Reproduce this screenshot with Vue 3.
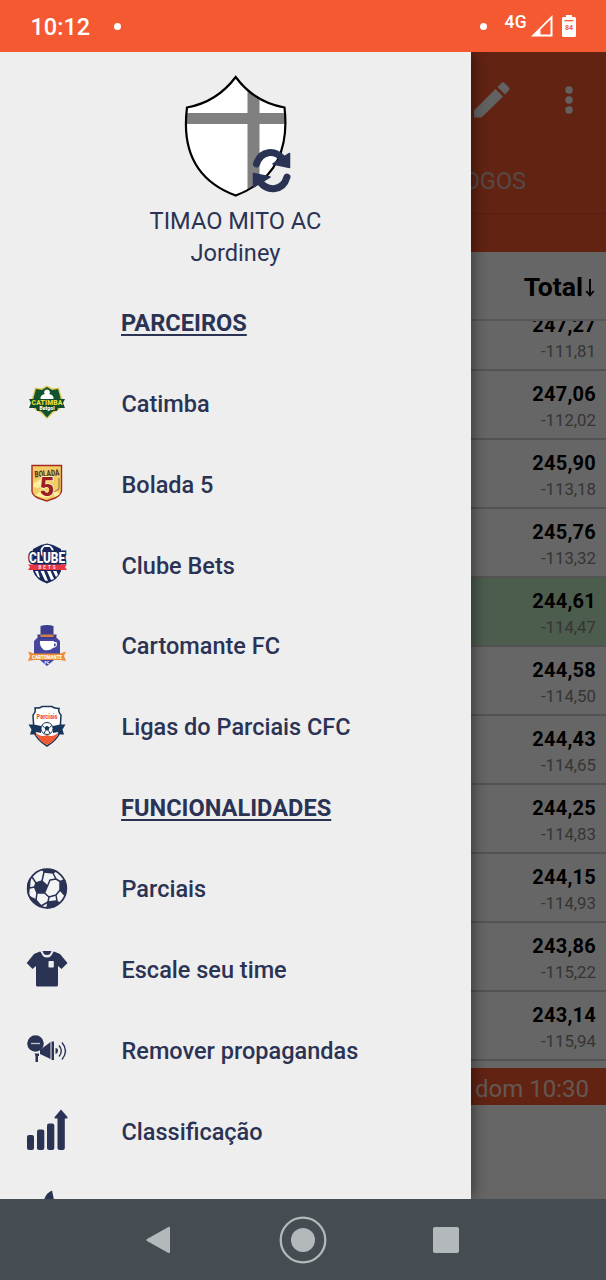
<script setup>
const standings = [
  { total: '247,27', diff: '-111,81' },
  { total: '247,06', diff: '-112,02' },
  { total: '245,90', diff: '-113,18' },
  { total: '245,76', diff: '-113,32' },
  { total: '244,61', diff: '-114,47', mine: true },
  { total: '244,58', diff: '-114,50' },
  { total: '244,43', diff: '-114,65' },
  { total: '244,25', diff: '-114,83' },
  { total: '244,15', diff: '-114,93' },
  { total: '243,86', diff: '-115,22' },
  { total: '243,14', diff: '-115,94' },
]
</script>

<template>
  <div class="phone">
    <header class="status">
      <span class="clock">10:12</span>
      <i class="dot"></i>
      <span class="grow"></span>
      <i class="dot"></i>
      <span class="net">4G</span>
      <svg class="signal" width="22" height="22" viewBox="0 0 22 22">
        <path d="M0 21.5 21.5 0V21.5Z" fill="#fff" />
        <path d="M9.5 19.5V14.5L19.5 4.6V19.5Z" fill="#f45931" />
      </svg>
      <svg class="battery" width="14" height="22" viewBox="0 0 14 22">
        <path d="M4 0H10V2H12.5Q14 2 14 3.5V20.5Q14 22 12.5 22H1.5Q0 22 0 20.5V3.500Q0 2 1.500 2H4Z" fill="#fff" />
        <path d="M2.500 5.700H11.500" stroke="#f45931" stroke-width="1.300" />
        <text x="7" y="15" text-anchor="middle" class="charge">84</text>
      </svg>
    </header>

    <main class="stage">
      <section class="page">
        <div class="appbar">
          <div class="tools">
            <svg width="36" height="36" viewBox="0 0 36 36" fill="#f4f4f4">
              <path d="M0 28.500 21.500 7 29 14.500 7.500 35.500H0Z" />
              <path d="M23.500 5 27.500 1Q29 -.3 30.500 1L35 5.500Q36 7 35 8.300L31 12.500Z" />
            </svg>
            <svg width="8" height="28" viewBox="0 0 8 28" fill="#f4f4f4">
              <circle cx="4" cy="4" r="3.700" /><circle cx="4" cy="14" r="3.700" /><circle cx="4" cy="24" r="3.700" />
            </svg>
          </div>
          <div class="tabs"><span>JOGOS</span></div>
        </div>
        <div class="thead"><span>Total</span>
          <svg width="10" height="18" viewBox="0 0 10 18" fill="none" stroke="#000" stroke-width="1.900"><path d="M5 0V16" /><path d="M1.300 12 5 16.300 8.700 12" /></svg>
        </div>
        <div class="table">
          <div v-for="s in standings" :key="s.total" class="row" :class="{ mine: s.mine }">
            <b>{{ s.total }}</b>
            <span>{{ s.diff }}</span>
          </div>
        </div>
        <div class="banner">dom 10:30</div>
        <div class="scrim"></div>
      </section>

      <nav class="drawer">
        <div class="team">
          <svg class="crest" width="110" height="124" viewBox="0 0 110 124">
            <defs>
              <clipPath id="crestShape"><path d="M53.700 2Q72 27 102.500 32.500C107 72 95 105 53.700 120.500C12 105 0 72 5 32.500Q35 27 53.700 2Z" /></clipPath>
            </defs>
            <g clip-path="url(#crestShape)">
              <path d="M0 0H110V124H0Z" fill="#fff" />
              <path d="M0 38H110V49H0ZM65.500 0H77.500V124H65.500Z" fill="#808080" />
            </g>
            <path d="M53.700 2Q72 27 102.500 32.500C107 72 95 105 53.700 120.500C12 105 0 72 5 32.500Q35 27 53.700 2Z" fill="none" stroke="#000" stroke-width="2.200" />
            <g fill="none" stroke="#2b3355" stroke-width="7" stroke-linecap="round">
              <path d="M74.500 89C79 75 93 74.500 101 84" />
              <path d="M105 102C101 116 86 117 78 107" />
            </g>
            <path d="M107.500 78.500V92.500L91 89ZM71.500 112V98.500L88 102Z" fill="#2b3355" stroke="#2b3355" stroke-width="1.500" stroke-linejoin="round" />
          </svg>
          <p class="team-name">TIMAO MITO AC</p>
          <p class="owner">Jordiney</p>
        </div>

        <h2>PARCEIROS</h2>
        <a class="item">
          <svg viewBox="0 0 42 42">
            <path d="M21 2.500 26.500 5.500 33 4.500 35 12 37 17 34 26 27 30 21 36 15 30 8 26 5 17 7 12 9 4.500 15.500 5.500Z" fill="#e2c850" />
            <path d="M21 4 26 7 32 6 34 13 35 18 32 25 26 29 21 34.500 16 29 10 25 7 18 8 13 10 6 16 7Z" fill="#11552e" />
            <path d="M21 6.500A2.800 2.800 0 0 1 23.300 11Q28 12 27.500 16H14.500Q14 12 18.700 11A2.800 2.800 0 0 1 21 6.500Z" fill="#fff" />
            <path d="M3 16H39L37 20 39 25H32L31 28H11L10 25H3L5 20Z" fill="#124b2c" />
            <text x="21" y="21.500" class="badge" font-size="6.800" fill="#e5df36" textLength="31">CATIMBA</text>
            <text x="21" y="27" class="badge" font-size="5" fill="#fff" textLength="15">Betgol</text>
          </svg>
          <span>Catimba</span>
        </a>
        <a class="item">
          <svg viewBox="0 0 42 42">
            <path d="M6 1.500H35.500V27Q35 31 29 34L20.700 37 12 34Q6 31 6 27Z" fill="#f3cc66" stroke="#a52b22" stroke-width="1.400" />
            <path d="M8 19 17 14 13 24 7 23ZM23 22 34 30 29 33ZM14 28 9 31 21 35Z" fill="#fff0a0" />
            <path d="M33 14V25M26 29 33 25" stroke="#8a6a2a" stroke-width="1" />
            <text x="21" y="12.500" class="badge" font-size="9" fill="#5b3a24" textLength="25" lengthAdjust="spacingAndGlyphs" transform="rotate(-5 21 10)">BOLADA</text>
            <text x="21" y="32" class="badge" font-size="25" fill="#9d1e25" stroke="#fff3a9" stroke-width="2" paint-order="stroke">5</text>
          </svg>
          <span>Bolada 5</span>
        </a>
        <a class="item">
          <svg viewBox="0 0 42 42">
            <path d="M21 -1.500 27 0 35 4V26Q32 35 21 38.500Q10 35 7 26V4L15 0Z" fill="#18275b" />
            <circle cx="21" cy="6.500" r="6.800" fill="#f6f7fb" /><path d="M18 2H24L26 6 21 9 16 6Z" fill="#18275b" />
            <path d="M9 26H12L14 33 12 32ZM14.500 26H18L22 36 19 35.500ZM21 26H24.500L28 34 25 35ZM27 26H30.500L32 30 30 32Z" fill="#fff" />
            <text x="21" y="18" class="badge clube" font-size="14.500" fill="#fff" stroke="#18275b" stroke-width="3" textLength="36" lengthAdjust="spacingAndGlyphs">CLUBE</text>
            <path d="M2 19.500H41L39 22 41 25H2L4 22Z" fill="#e83743" />
            <text x="21" y="24" class="badge" font-size="4.500" fill="#ffd9dd" textLength="17">BETS</text>
          </svg>
          <span>Clube Bets</span>
        </a>
        <a class="item">
          <svg viewBox="0 0 42 42">
            <path d="M13 10H29L34 15V32L28 34 21 40 14 34 8 32V15Z" fill="#4646a0" />
            <path d="M14.500 0Q21 -2 27.500 0V8.500H30.500Q31 12 28 13H14Q11 12 11.500 8.500H14.500Z" fill="#3c3d8c" />
            <path d="M14.500 8.500H27.500V11H14.500Z" fill="#cf8050" />
            <path d="M14 15H28V16H30.500Q32.500 21 27 22Q24 25 18 24Q13 20 14 15ZM28 17.500V20.500Q30.500 20 29.500 17.500Z" fill="#fff" fill-rule="evenodd" />
            <path d="M2 25.500 8 27.500H34L40 25.500 38 30 40 35 34 34H8L2 35 4 30Z" fill="#ec8b38" />
            <text x="21" y="33" class="badge" font-size="5.800" fill="#fff" textLength="30" lengthAdjust="spacingAndGlyphs">CARTOMANTE</text>
            <text x="21" y="37.800" class="badge" font-size="4" fill="#fff">FC</text>
          </svg>
          <span>Cartomante FC</span>
        </a>
        <a class="item">
          <svg viewBox="0 0 42 42">
            <path d="M9 1Q15 1 16 -.500H26Q27 1 33 1.500Q32 5 35 8L34 25Q31 33 21 39Q11 33 8 25L7 8Q10 5 9 1Z" fill="#fff" stroke="#17365a" stroke-width="1.500" />
            <path d="M9 24.500Q14 31 21 28Q28 31 33 24.500Q30 34 21 38Q12 34 9 24.500Z" fill="#ef5b35" />
            <path d="M2.500 17.500H8L15 19V26L10 25 9.500 27.500H4L5.500 22.500ZM39.500 17.500H34L27 19V26L32 25 32.500 27.500H38L36.500 22.500Z" fill="#17365a" />
            <circle cx="21" cy="21.500" r="6" fill="#fff" stroke="#17365a" />
            <path d="M18.500 20.500 21 18.800 23.500 20.500 22.500 23.500H19.500Z" fill="#17365a" />
            <path d="M16 18.500 18.500 20.500M26 18.500 23.500 20.500M19.500 23.500 18 26.500M22.500 23.500 24 26.500" stroke="#17365a" />
            <text x="21" y="12" class="badge" font-size="7" fill="#ef5535" textLength="21" lengthAdjust="spacingAndGlyphs">Parciais</text>
          </svg>
          <span>Ligas do Parciais CFC</span>
        </a>

        <h2>FUNCIONALIDADES</h2>
        <a class="item">
          <svg viewBox="0 0 42 42" fill="#2b3355">
            <circle cx="21" cy="19.500" r="19.300" fill="#f3f4f6" stroke="#2b3355" stroke-width="1.800" />
            <g stroke="#2b3355" stroke-width="1.500" stroke-linejoin="round">
              <path d="M10 14 16 12 21.500 17 18.500 24 11 24 8.500 18Z" />
              <path d="M34 12.500 38.500 11 40.300 20 38.500 26 34 21Z" /><path d="M22 33 30 32 33.500 34Q28 39 21 39Z" />
              <path d="M17 1Q24 -.500 30 2L27 4 18 3ZM2 15 4 10 3.500 17 2.500 24 1.700 20ZM4 28 10 31 15 37Q7 34 4 28Z" />
              <path d="M18 3 16 12M27 4 30 10 34 12.500M30 10 24 11 21.500 17M18.500 24 23 28 30 26 34 21M23 28 22 33M30 26 31 32M11 24 10 31M8.500 18 3.500 19M10 14 6 8M22 33 15 37" fill="none" />
            </g>
          </svg>
          <span>Parciais</span>
        </a>
        <a class="item">
          <svg viewBox="0 0 42 42" fill="#2b3355">
            <path d="M14 2.500Q21 11 28 2.500L34 5 41.500 14 35.500 20 32 17V36Q32 37.500 30.500 37.500H11.500Q10 37.500 10 36V17L6.500 20 .700 14 8 5Z" />
            <path d="M15.500 2H26.500Q25 8.500 21 8.500T15.500 2Z" /><path d="M15 2.200H27Q26 8.500 21 8.500T15 2.200Z" fill="#eee" /><path d="M17 2H25Q25 6 21 6T17 2Z" fill="#2b3355" />
            <rect x="22.500" y="12" width="5.300" height="6.500" rx=".7" fill="#eee" />
          </svg>
          <span>Escale seu time</span>
        </a>
        <a class="item">
          <svg viewBox="0 0 42 42" fill="#2b3355">
            <circle cx="9.500" cy="13.500" r="8.300" /><path d="M5 13.500H14" stroke="#c6c8d0" stroke-width="1.300" />
            <path d="M14 20 24.500 12V29L14 24ZM25.500 11.500H28V30H25.500ZM29.500 18Q32 18 32 20.800T29.500 24ZM8.500 23.500H13V26H12V32H9.500V26Z" />
            <path d="M33 15.500Q37.500 21 33 26.500M36 12.500Q43 21 36 29.500" fill="none" stroke="#2b3355" stroke-width="1.400" />
          </svg>
          <span>Remover propagandas</span>
        </a>
        <a class="item">
          <svg viewBox="0 0 42 42" fill="#2b3355">
            <rect x="1" y="24" width="7" height="15" rx="2" /><rect x="11" y="18.500" width="7.300" height="20.500" rx="2" /><rect x="21" y="12.500" width="7.300" height="26.500" rx="2" />
            <path d="M35 -1.500 41.500 6Q42 7.500 40.500 7.500H38.800V37Q38.800 39 36.800 39H33.500Q31.500 39 31.500 37V7.500H29.500Q28 7.500 28.700 6Z" />
          </svg>
          <span>Classificação</span>
        </a>
        <div class="item">
          <svg viewBox="0 0 42 42" fill="#2b3355"><path d="M18 8Q20 1 26 -1.500Q27 3 28 8 32 14 29 22H15Q12 14 18 8Z" /></svg>
        </div>
      </nav>
    </main>

    <footer class="sysnav">
      <svg width="24" height="28" viewBox="0 0 24 28"><path d="M1 13 22 1.200Q24 .2 24 2V26Q24 27.800 22 26.800L1 15Q-.5 14 1 13Z" fill="#b3b9ba" /></svg>
      <svg class="home" width="48" height="48" viewBox="0 0 48 48"><circle cx="24" cy="24" r="22.300" fill="none" stroke="#b3b9ba" stroke-width="2.300" /><circle cx="24" cy="24" r="12" fill="#b3b9ba" /></svg>
      <svg width="26" height="26" viewBox="0 0 26 26"><rect width="26" height="26" rx="2" fill="#b3b9ba" /></svg>
    </footer>
  </div>
</template>

<style>
body { margin: 0; }
</style>

<style scoped>
.phone { width: 606px; height: 1280px; display: flex; flex-direction: column; overflow: hidden; font-family: Roboto, "Liberation Sans", sans-serif; color: #2b3355; }
.status { height: 52px; flex: none; box-sizing: border-box; background: #f45931; color: #fff; display: flex; align-items: center; padding: 0 30px 0 30.5px; }
.clock { font-size: 23.5px; font-weight: 500; width: 83px; padding-top: 2px; }
.dot { width: 7px; height: 7px; border-radius: 50%; background: #fff; }
.grow { flex: 1; }
.net { font-size: 17.500px; font-weight: 500; margin: -9px 4px 0 18px; line-height: 20px; letter-spacing: .3px; }
.battery { margin-left: 9px; }
.charge { font: 700 7px Roboto, sans-serif; fill: #f45931; }
.stage { height: 1147px; flex: none; position: relative; overflow: hidden; }
.page { height: 100%; background: #fff; position: relative; color: #000; }
.appbar { height: 200px; background: #f45931; }
.tools { height: 95px; display: flex; align-items: center; justify-content: flex-end; gap: 55px; padding-right: 33px; }
.tabs { height: 67px; box-sizing: border-box; display: flex; align-items: center; justify-content: flex-end; padding: 2px 80px 0 0; color: #d5b9b1; font-size: 23.5px; border-bottom: 1px solid #e04c27; }
.thead { height: 69px; box-sizing: border-box; border-bottom: 2px solid #ddd; display: flex; justify-content: flex-end; align-items: center; gap: 2px; padding: 1px 11px 0 0; font-size: 26.500px; font-weight: 700; }
.thead svg { margin-top: 4px; }
.table { height: 740px; overflow: hidden; display: flex; flex-direction: column; justify-content: flex-end; }
.row { height: 69px; flex: none; box-sizing: border-box; border-bottom: 2px solid #d0d0d0; padding: 11px 10px 0 0; display: flex; flex-direction: column; align-items: flex-end; }
.row b { font-size: 20px; line-height: 25px; font-weight: 700; letter-spacing: .25px; }
.row span { font-size: 16.8px; line-height: 27px; color: #858585; }
.mine { background: #bfe6c0; }
.banner { margin-top: 7px; height: 37px; box-sizing: border-box; padding: 5px 17px 0 0; background: #f45931; color: #f5d9d0; text-align: right; font-size: 24px; line-height: 33px; }
.scrim { position: absolute; inset: 0; background: rgba(0, 0, 0, .6); }
.drawer { position: absolute; left: 0; top: 0; width: 471px; height: 1147px; background: #eee; overflow: hidden; box-shadow: 2px 0 14px rgba(0, 0, 0, .45); }
.team { height: 230px; box-sizing: border-box; padding-top: 23px; display: flex; flex-direction: column; align-items: center; }
.crest { flex: none; margin-left: 3px; }
.team p { margin: 0; font-size: 23.6px; line-height: 32px; white-space: nowrap; }
.team .team-name { margin-top: 6px; }
h2 { margin: 0; height: 80.85px; line-height: 82px; padding-left: 121px; font-size: 23.6px; font-weight: 700; text-decoration: underline; text-decoration-thickness: 1.5px; text-underline-offset: 3px; }
.item { height: 80.9px; display: flex; align-items: center; padding-left: 26px; font-size: 23.5px; font-weight: 500; white-space: nowrap; }
.item svg { width: 42px; height: 42px; flex: none; margin: 2px 53.5px 0 0; overflow: visible; }
.item span { padding-top: 1px; }
.badge { font-family: Roboto, sans-serif; font-weight: 900; text-anchor: middle; }
.clube { paint-order: stroke; }
.sysnav { height: 81px; flex: none; background: #454d52; display: flex; align-items: center; justify-content: space-between; box-sizing: border-box; padding: 0 147px 0 146px; }
.home { margin-left: 2px; }
</style>
